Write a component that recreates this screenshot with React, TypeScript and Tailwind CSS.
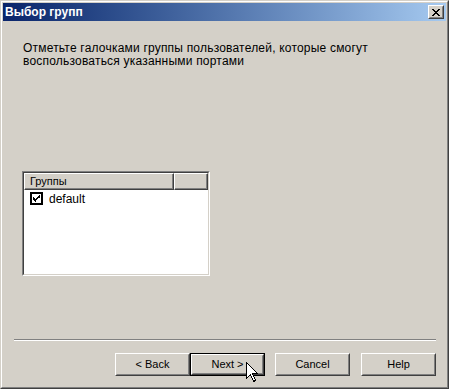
const font = { fontFamily: '"Liberation Sans", Arial, sans-serif' };

const Btn = ({ label, isDefault = false }: { label: string; isDefault?: boolean }) => (
  <div className={`w-[75px] h-[23px] ${isDefault ? 'border border-black' : ''}`}>
    <div className="w-full h-full border border-t-white border-l-white border-r-[#404040] border-b-[#404040] bg-[#d4d0c8]">
      <div className="w-full h-full border border-t-[#d4d0c8] border-l-[#d4d0c8] border-r-[#808080] border-b-[#808080] flex items-center justify-center text-[11px] text-black">
        {label}
      </div>
    </div>
  </div>
);

const Cursor = () => (
  <svg className="absolute left-[246px] top-[362px]" width="13" height="21" viewBox="0 0 13 21">
    <path
      d="M0.5 0.5 L0.5 16.5 L4.5 12.5 L7.5 19.5 L9.5 18.5 L6.5 11.5 L11.5 11.5 Z"
      fill="white"
      stroke="black"
      strokeWidth="1"
      shapeRendering="crispEdges"
    />
  </svg>
);

export default function App() {
  return (
    <div className="relative w-[449px] h-[389px] bg-[#d4d0c8]" style={font}>
      {/* outer 3d frame */}
      <div className="w-full h-full border border-t-[#d4d0c8] border-l-[#d4d0c8] border-r-[#404040] border-b-[#404040]">
        <div className="w-full h-full border border-t-white border-l-white border-r-[#808080] border-b-[#808080] p-px flex flex-col">
          {/* title bar */}
          <div className="h-[18px] flex items-center justify-between bg-gradient-to-r from-[#0a246a] to-[#a6caf0] pl-[2px] pr-[2px]">
            <span className="text-white font-bold text-[12px] leading-none">Выбор групп</span>
            <div className="w-[16px] h-[14px] border border-t-white border-l-white border-r-[#404040] border-b-[#404040] bg-[#d4d0c8]">
              <div className="w-full h-full border border-t-[#d4d0c8] border-l-[#d4d0c8] border-r-[#808080] border-b-[#808080] flex items-center justify-center">
                <svg width="8" height="7" viewBox="0 0 8 7" shapeRendering="crispEdges">
                  <path d="M0 0h2v1h-2z M6 0h2v1h-2z M1 1h2v1h-2z M5 1h2v1h-2z M2 2h4v1h-4z M3 3h2v1h-2z M2 4h4v1h-4z M1 5h2v1h-2z M5 5h2v1h-2z M0 6h2v1h-2z M6 6h2v1h-2z" fill="black" />
                </svg>
              </div>
            </div>
          </div>

          {/* client */}
          <div className="flex-1 flex flex-col">
            <p className="mt-[21px] ml-[20px] w-[400px] text-[12px] leading-[13px] tracking-[0.2px] text-black">
              Отметьте галочками группы пользователей, которые смогут воспользоваться указанными портами
            </p>

            {/* list */}
            <div className="mt-[103px] ml-[19px] w-[188px] h-[105px] border border-t-[#808080] border-l-[#808080] border-r-white border-b-white">
              <div className="w-full h-full border border-t-[#404040] border-l-[#404040] border-r-[#d4d0c8] border-b-[#d4d0c8] bg-white flex flex-col">
                <div className="flex h-[17px]">
                  <div className="w-[150px] h-full border border-t-white border-l-white border-r-[#404040] border-b-[#404040] bg-[#d4d0c8]">
                    <div className="w-full h-full border-r border-b border-r-[#808080] border-b-[#808080] flex items-center pl-[5px] text-[11px] text-black">
                      Группы
                    </div>
                  </div>
                  <div className="flex-1 h-full border border-t-white border-l-white border-r-[#404040] border-b-[#404040] bg-[#d4d0c8]">
                    <div className="w-full h-full border-r border-b border-r-[#808080] border-b-[#808080]" />
                  </div>
                </div>
                <div className="flex items-center h-[15px] pl-[6px] mt-[1px]">
                  <div className="w-[13px] h-[13px] border-2 border-black bg-white flex items-center justify-center">
                    <svg width="7" height="7" viewBox="0 0 7 7" shapeRendering="crispEdges">
                      <path d="M6 0h1v1h-1z M5 1h1v1h-1z M6 1h1v1h-1z M0 2h1v1h-1z M4 2h2v1h-2z M0 3h2v1h-2z M3 3h2v1h-2z M0 4h4v1h-4z M1 5h2v1h-2z M2 6h1v1h-1z M6 2h1v1h-1z" fill="black" />
                    </svg>
                  </div>
                  <span className="ml-[6px] text-[12px] text-black">default</span>
                </div>
              </div>
            </div>

            {/* separator */}
            <div className="mt-[63px] ml-[11px] w-[422px] border-t border-t-[#808080] border-b border-b-white" />

            {/* buttons */}
            <div className="mt-[12px] ml-[112px] flex">
              <Btn label="< Back" />
              <Btn label="Next >" isDefault />
              <div className="w-[10px]" />
              <Btn label="Cancel" />
              <div className="w-[11px]" />
              <Btn label="Help" />
            </div>
          </div>
        </div>
      </div>
      <Cursor />
    </div>
  );
}
